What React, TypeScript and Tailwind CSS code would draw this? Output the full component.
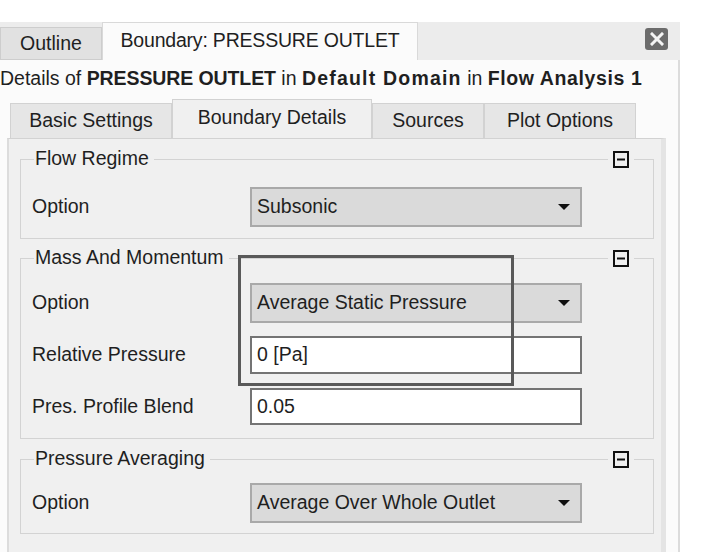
import type { ReactNode } from "react";

const FONT = "font-['Liberation_Sans',Arial,sans-serif]";

function DropArrow() {
  return (
    <svg width="12" height="8" viewBox="0 0 12 8" className="shrink-0">
      <polygon points="0,1 12,1 6,7" fill="#111" />
    </svg>
  );
}

function MinusBox() {
  return (
    <svg width="16" height="17" viewBox="0 0 16 17" className="shrink-0">
      <rect x="1" y="1" width="14" height="15" fill="none" stroke="#111" strokeWidth="2" />
      <line x1="4" y1="8.5" x2="12" y2="8.5" stroke="#111" strokeWidth="2" />
    </svg>
  );
}

function Dropdown({ value }: { value: string }) {
  return (
    <div className="flex h-[40px] w-[332px] items-center justify-between border-2 border-[#a9a9a9] bg-[#dadada] pl-[5px] pr-[10px]">
      <span>{value}</span>
      <DropArrow />
    </div>
  );
}

function TextBox({ value, h }: { value: string; h: string }) {
  return (
    <div className={["flex w-[332px] items-center border-2 border-[#747474] bg-white pl-[5px]", h].join(" ")}>
      {value}
    </div>
  );
}

function Row({ label, children, className = "" }: { label: string; children: ReactNode; className?: string }) {
  return (
    <div className={["flex items-center", className].join(" ")}>
      <div className="w-[229px] pl-[11px]">{label}</div>
      {children}
    </div>
  );
}

function Group({
  title,
  children,
  className = "",
  bodyClass = "",
}: {
  title: string;
  children: ReactNode;
  className?: string;
  bodyClass?: string;
}) {
  return (
    <div className={["flex flex-col", className].join(" ")}>
      {/* etched header line with title and collapse box */}
      <div className="flex h-[18px] items-center">
        <div className="h-[9px] w-[1px] self-end bg-[#d3d3d3]" />
        <div className="h-[1px] w-[13px] bg-[#d3d3d3]" />
        <span className="px-[1px] leading-none">{title}</span>
        <div className="ml-[4px] h-[1px] flex-1 bg-[#d3d3d3]" />
        <div className="px-[5px]">
          <MinusBox />
        </div>
        <div className="h-[1px] w-[19px] bg-[#d3d3d3]" />
        <div className="h-[9px] w-[1px] self-end bg-[#d3d3d3]" />
      </div>
      <div className={["border-x border-b border-[#d3d3d3]", bodyClass].join(" ")}>{children}</div>
    </div>
  );
}

export default function App() {
  return (
    <div className={["relative h-[552px] w-[713px] overflow-hidden bg-white text-[19.5px] text-[#1f1f1f]", FONT].join(" ")}>
      <div className="h-[22px]" />

      <div className="flex w-[680px] flex-col">
        {/* top tabs */}
        <div className="flex h-[38px] items-end bg-[#ececec]">
          <div className="flex h-[33px] w-[102px] items-center justify-center border border-[#cdcdcd] bg-[#e1e1e1]">
            Outline
          </div>
          <div className="flex h-[38px] w-[316px] items-center justify-center border-x border-t border-[#d9d9d9] bg-[#fbfbfb] pb-[2px] tracking-[-0.2px]">
            Boundary: PRESSURE OUTLET
          </div>
          <div className="flex-1" />
          <div className="mb-[10px] mr-[12px] flex h-[22px] w-[23px] items-center justify-center rounded-[3px] bg-[#6c6c6c]">
            <svg width="14" height="14" viewBox="0 0 14 14">
              <path d="M2 2 L12 12 M12 2 L2 12" stroke="#f4f4f4" strokeWidth="3" strokeLinecap="square" />
            </svg>
          </div>
        </div>

        {/* body */}
        <div className="flex h-[492px] flex-col border-r-2 border-[#dcdcdc] bg-[#fbfbfb]">
          <div className="flex h-[39px] items-center whitespace-nowrap pb-[2px]">
            Details of&nbsp;<b className="tracking-[-0.1px]">PRESSURE OUTLET</b>&nbsp;in&nbsp;
            <b className="tracking-[1.2px]">Default Domain</b>&nbsp;in&nbsp;
            <b className="tracking-[0.6px]">Flow Analysis 1</b>
          </div>

          {/* inner tabs */}
          <div className="flex h-[39px] items-end pl-[10px]">
            <div className="flex h-[35px] w-[162px] items-center justify-center border-x border-t border-[#d2d2d2] bg-[#e6e6e6]">
              Basic Settings
            </div>
            <div className="flex h-[39px] w-[200px] items-center justify-center border-x border-t border-[#d2d2d2] bg-[#f0f0f0] pb-[3px]">
              Boundary Details
            </div>
            <div className="flex h-[35px] w-[112px] items-center justify-center border-x border-t border-[#d2d2d2] bg-[#e6e6e6]">
              Sources
            </div>
            <div className="flex h-[35px] w-[152px] items-center justify-center border-x border-t border-[#d2d2d2] bg-[#e6e6e6]">
              Plot Options
            </div>
          </div>

          {/* inner panel */}
          <div className="ml-[7px] flex w-[659px] flex-1 flex-col border-l-2 border-r-[5px] border-t border-l-[#dcdcdc] border-r-[#e4e4e4] border-t-[#d2d2d2] bg-[#f0f0f0] pl-[11px] pr-[7px] pt-[11px]">
            <Group title="Flow Regime" bodyClass="pt-[19px] pb-[11px]">
              <Row label="Option">
                <Dropdown value="Subsonic" />
              </Row>
            </Group>

            <Group title="Mass And Momentum" className="mt-[10px]" bodyClass="pt-[16px] pb-[13px]">
              <Row label="Option">
                <Dropdown value="Average Static Pressure" />
              </Row>
              <Row label="Relative Pressure" className="mt-[13px]">
                <TextBox value="0 [Pa]" h="h-[38px]" />
              </Row>
              <Row label="Pres. Profile Blend" className="mt-[14px]">
                <TextBox value="0.05" h="h-[37px]" />
              </Row>
            </Group>

            <Group title="Pressure Averaging" className="mt-[11px]" bodyClass="pt-[15px] pb-[10px]">
              <Row label="Option">
                <Dropdown value="Average Over Whole Outlet" />
              </Row>
            </Group>
          </div>
        </div>
      </div>

      {/* annotation highlight drawn over the form */}
      <div className="pointer-events-none absolute left-[238px] top-[255px] h-[131px] w-[276px] border-[3px] border-[#595959]" />
    </div>
  );
}
